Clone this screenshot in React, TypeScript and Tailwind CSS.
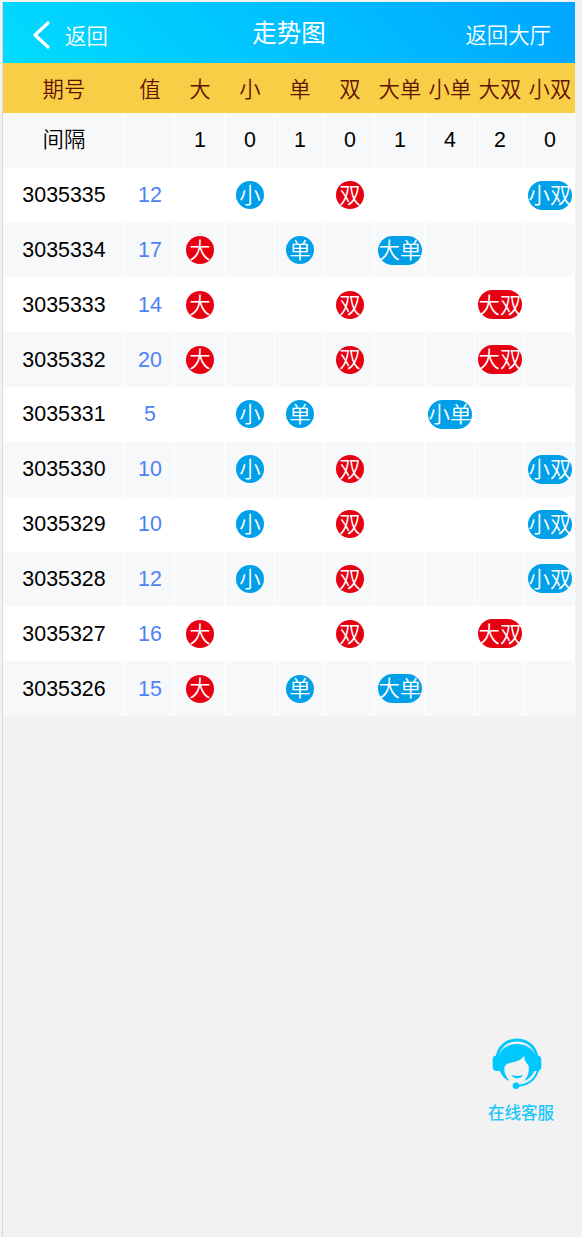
const columns = ['期号', '值', '大', '小', '单', '双', '大单', '小单', '大双', '小双'];
const gaps = ['间隔', '', '1', '0', '1', '0', '1', '4', '2', '0'];

const draws: { id: string; value: number; marks: string[] }[] = [
  { id: '3035335', value: 12, marks: ['小', '双', '小双'] },
  { id: '3035334', value: 17, marks: ['大', '单', '大单'] },
  { id: '3035333', value: 14, marks: ['大', '双', '大双'] },
  { id: '3035332', value: 20, marks: ['大', '双', '大双'] },
  { id: '3035331', value: 5, marks: ['小', '单', '小单'] },
  { id: '3035330', value: 10, marks: ['小', '双', '小双'] },
  { id: '3035329', value: 10, marks: ['小', '双', '小双'] },
  { id: '3035328', value: 12, marks: ['小', '双', '小双'] },
  { id: '3035327', value: 16, marks: ['大', '双', '大双'] },
  { id: '3035326', value: 15, marks: ['大', '单', '大单'] },
];

const redMarks = ['大', '双', '大双'];
const grid = 'grid grid-cols-[122px_repeat(9,50px)]';
const cell = 'flex items-center justify-center border-r border-white pl-px whitespace-nowrap';

function Mark({ label }: { label: string }) {
  const color = redMarks.includes(label) ? 'bg-[#e60012]' : 'bg-[#00a0e9]';
  const size = label.length > 1 ? 'w-11 h-[29px]' : 'w-7 h-7';
  return (
    <span className={`flex shrink-0 items-center justify-center rounded-full text-white ${color} ${size}`}>
      <span className="pt-[3px] leading-none">{label}</span>
    </span>
  );
}

function ServiceIcon() {
  return (
    <svg viewBox="0 0 50 52" className="h-[52px] w-[50px]" fill="none">
      <path d="M5 19C7 8 15 2 25 2S43 8 45 19" stroke="#00c8ff" strokeWidth="2.800" />
      <path d="M5 17.500C2 17.500.7 19 .7 21.500V29c0 2.500 1.500 4 4.300 4h3c1.500 4.500 5 8.500 9.500 10C14 38.500 12 34.500 12.300 30.500 12.800 22.500 27 26.500 32 17.800c.3 4.200 2 7 4.500 9.700 1.300 5.500-.5 11-4.500 15.500 4.500-1.500 8.500-5.500 10.200-10H45c2.800 0 4.300-1.500 4.300-4v-7.500c0-2.500-1.500-4-4.300-4h-1.800C41 10.500 34 6 25 6S9 10.500 6.800 17.500z" fill="#00c8ff" />
      <path d="M19.500 36.700c3.500 1.700 8 1.700 11.700 0-2 4.800-9.700 4.800-11.700 0z" fill="#00c8ff" />
      <path d="M46 32c-2.700 9.800-10 15.500-22 15.800" stroke="#00c8ff" strokeWidth="2" />
      <circle cx="24" cy="47.700" r="3.300" fill="#00c8ff" />
    </svg>
  );
}

export default function App() {
  return (
    <div className="relative flex h-[1237px] w-[582px] flex-col bg-[#f2f2f2] pt-0.5 pl-[2px] font-['Liberation_Sans','Noto_Sans_CJK_SC',sans-serif] text-[21.4px] text-black">
      <div className="flex w-[573px] flex-1 flex-col border-l border-[#d8dadb]">
        <header className="grid h-[61px] w-[572px] shrink-0 grid-cols-3 items-center bg-[linear-gradient(45deg,#00dcff,#00a5ff)] text-white">
          <div className="flex items-center gap-[15px] pl-[29px] pt-[7px]">
            <svg viewBox="0 0 18 28" className="mt-[-2px] h-7 w-[18px]" fill="none" stroke="white" strokeWidth="3.200" strokeLinecap="round" strokeLinejoin="round">
              <path d="M16 2 3 14l13 12" />
            </svg>
            <span className="pt-[3px] font-[350] leading-none">返回</span>
          </div>
          <h1 className="pt-1 text-center text-[24.500px] leading-none">走势图</h1>
          <span className="pr-6 pt-[9px] text-right font-[350] leading-none">返回大厅</span>
        </header>
        <div className={`${grid} h-[50px] shrink-0 bg-[#f8ce46] font-[350] text-[#5f1305]`}>
          {columns.map((c) => (
            <div key={c} className="flex items-center justify-center whitespace-nowrap pt-1">{c}</div>
          ))}
        </div>
        <div className="grid h-[603px] w-[572px] shrink-0 grid-rows-11">
          <div className={`${grid} bg-[#f7f8fa] font-[350]`}>
            {gaps.map((g, i) => (
              <div key={i} className={cell}>{g}</div>
            ))}
          </div>
          {draws.map((d) => (
            <div key={d.id} className={`${grid} bg-white odd:bg-[#f7f8fa]`}>
              <div className={cell}>{d.id}</div>
              <div className={`${cell} text-[#4d82f7]`}>{d.value}</div>
              {columns.slice(2).map((c) => (
                <div key={c} className={`${cell} font-[350]`}>{d.marks.includes(c) && <Mark label={c} />}</div>
              ))}
            </div>
          ))}
        </div>
      </div>
      <div className="absolute left-[480px] top-[1038px] flex w-[82px] flex-col items-center text-[#1cc6fb]">
        <div className="-ml-2"><ServiceIcon /></div>
        <span className="mt-[15px] text-[16.500px] font-medium leading-none">在线客服</span>
      </div>
    </div>
  );
}
